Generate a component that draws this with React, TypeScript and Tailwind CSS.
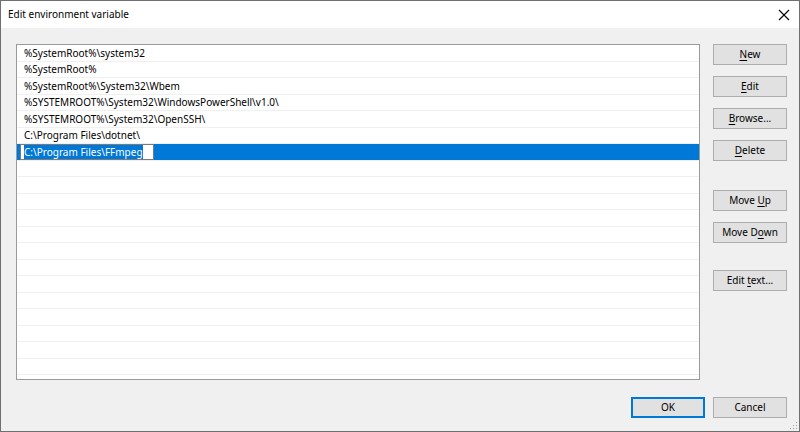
import React from 'react'

const paths = [
  '%SystemRoot%\\system32',
  '%SystemRoot%',
  '%SystemRoot%\\System32\\Wbem',
  '%SYSTEMROOT%\\System32\\WindowsPowerShell\\v1.0\\',
  '%SYSTEMROOT%\\System32\\OpenSSH\\',
  'C:\\Program Files\\dotnet\\',
]

function Btn({ children, className = '' }: { children: React.ReactNode; className?: string }) {
  return (
    <div
      className={`h-[21px] w-[74px] flex items-center justify-center whitespace-nowrap bg-[#e1e1e1] border border-[#adadad] text-[10px] text-black ${className}`}
    >
      {children}
    </div>
  )
}

export default function App() {
  const emptyRows = Array.from({ length: 13 })

  return (
    <div
      className="w-[800px] h-[432px] flex flex-col border border-[#6f6f6f] bg-[#f0f0f0] overflow-hidden"
      style={{ fontFamily: '"Noto Sans", "Open Sans", sans-serif' }}
    >
      {/* Title bar */}
      <div className="h-[27px] bg-white flex items-center justify-between pl-[7px] pr-[8px] shrink-0">
        <span className="text-[10px] text-black">Edit environment variable</span>
        <svg width="12" height="12" viewBox="0 0 12 12" className="mr-[1px]">
          <path d="M1 1 L11 11 M11 1 L1 11" stroke="#000" strokeWidth="1.1" />
        </svg>
      </div>

      {/* Client */}
      <div className="flex-1 relative flex flex-col pt-[16px] pl-[15px] pr-[12px]">
        <div className="flex gap-[13px]">
          {/* List */}
          <div className="w-[684px] h-[336px] border border-[#9a9a9a] bg-white overflow-hidden text-[10px] text-black whitespace-nowrap">
            {paths.map((p) => (
              <div key={p} className="h-[16.5px] border-b border-[#f0f0f0] pl-[7px] flex items-center leading-none">
                {p}
              </div>
            ))}
            <div className="h-[16.5px] border-b border-[#f0f0f0] bg-[#0078d7] pl-[3px] flex items-center">
              <div className="h-[16px] w-[134px] bg-white border border-[#7a7a7a] flex items-center pl-[3px] leading-none">
                <span className="bg-[#0078d7] text-white py-[2px]">C:\Program Files\FFmpeg</span>
              </div>
            </div>
            {emptyRows.map((_, i) => (
              <div key={i} className="h-[16.5px] border-b border-[#f0f0f0]" />
            ))}
          </div>

          {/* Buttons */}
          <div className="flex flex-col">
            <Btn>
              <span className="underline underline-offset-2">N</span>ew
            </Btn>
            <Btn className="mt-[11px]">
              <span className="underline underline-offset-2">E</span>dit
            </Btn>
            <Btn className="mt-[11px]">
              <span className="underline underline-offset-2">B</span>rowse...
            </Btn>
            <Btn className="mt-[11px]">
              <span className="underline underline-offset-2">D</span>elete
            </Btn>
            <Btn className="mt-[29px]">
              Move&nbsp;<span className="underline underline-offset-2">U</span>p
            </Btn>
            <Btn className="mt-[11px]">
              Move D<span className="underline underline-offset-2">o</span>wn
            </Btn>
            <Btn className="mt-[27px]">
              Edit&nbsp;<span className="underline underline-offset-2">t</span>ext...
            </Btn>
          </div>
        </div>

        {/* OK / Cancel */}
        <div className="flex justify-end gap-[8px] mt-[17px]">
          <div className="h-[21px] w-[74px] flex items-center justify-center bg-[#e1e1e1] border-2 border-[#0078d7] text-[10px] text-black">
            OK
          </div>
          <Btn>Cancel</Btn>
        </div>

        {/* resize grip */}
        <svg width="8" height="8" viewBox="0 0 8 8" className="absolute right-[1px] bottom-[1px]">
          <rect x="6" y="0" width="1" height="1" fill="#a0a0a0" />
          <rect x="3" y="3" width="1" height="1" fill="#a0a0a0" />
          <rect x="6" y="3" width="1" height="1" fill="#a0a0a0" />
          <rect x="0" y="6" width="1" height="1" fill="#a0a0a0" />
          <rect x="3" y="6" width="1" height="1" fill="#a0a0a0" />
          <rect x="6" y="6" width="1" height="1" fill="#a0a0a0" />
        </svg>
      </div>
    </div>
  )
}
